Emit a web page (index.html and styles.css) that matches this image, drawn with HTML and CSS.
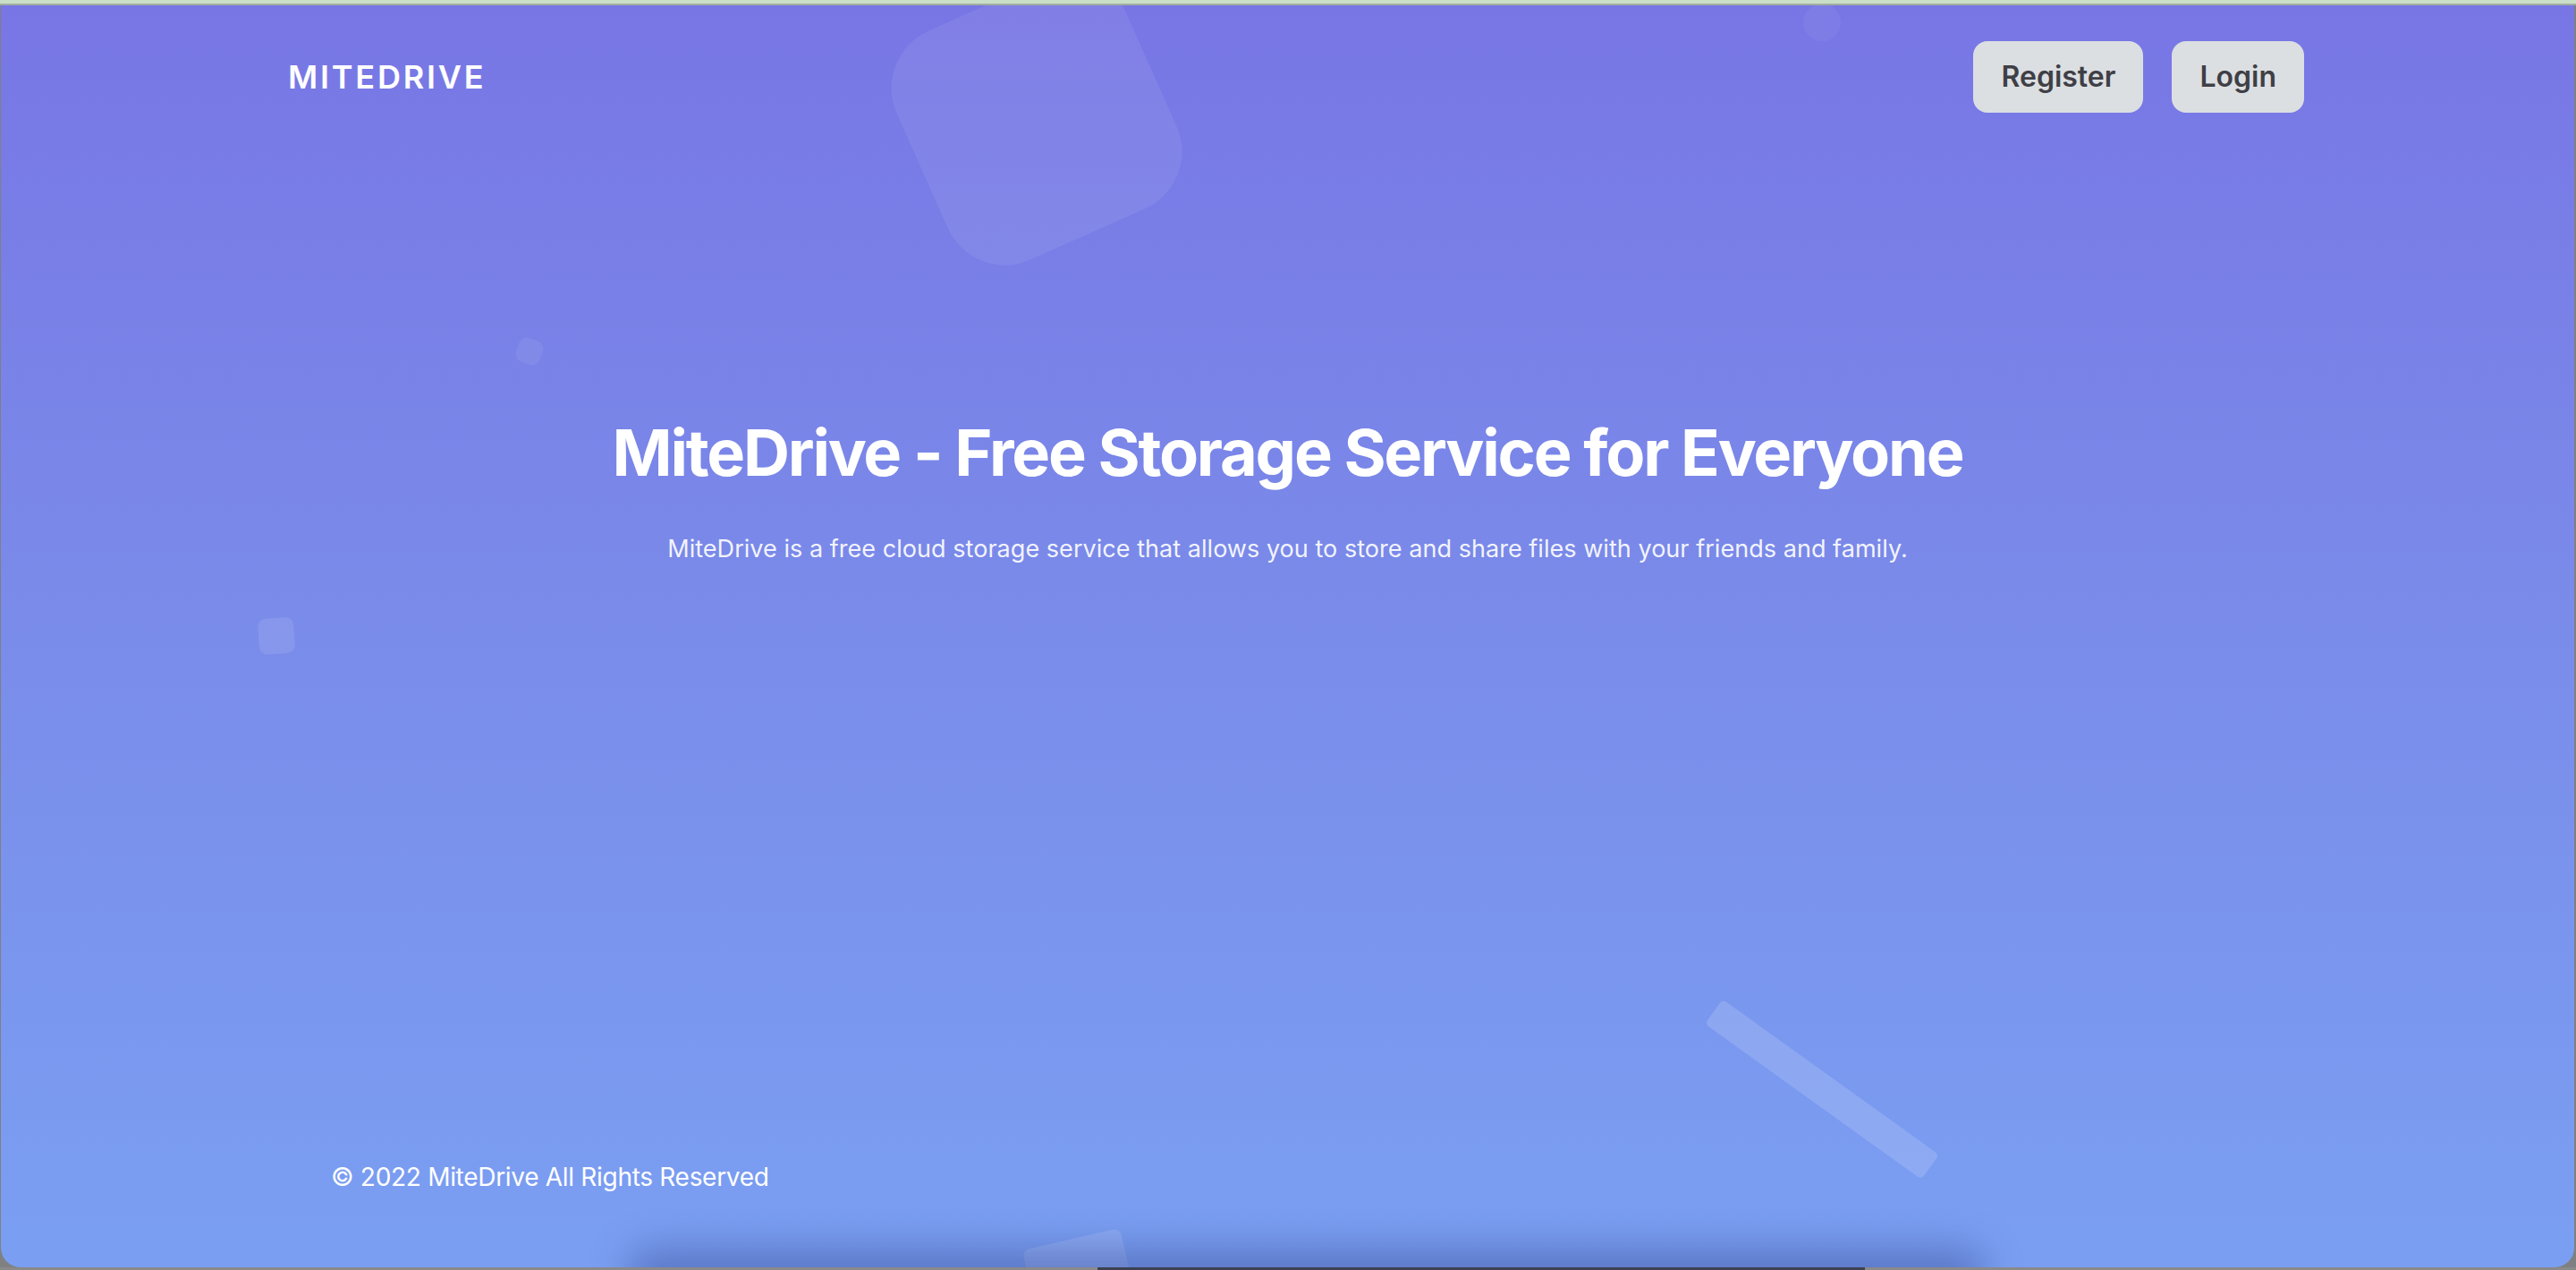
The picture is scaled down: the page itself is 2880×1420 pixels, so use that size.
FILE: index.html
```html
<!DOCTYPE html>
<html lang="en">
<head>
<meta charset="utf-8">
<title>MiteDrive</title>
<link rel="stylesheet" href="styles.css">
</head>
<body>
<div class="topstrip"></div>
<div class="window">
  <div class="shapes" aria-hidden="true">
    <span class="shape shape-big"></span>
    <span class="shape shape-circle"></span>
    <span class="shape shape-small"></span>
    <span class="shape shape-left"></span>
    <span class="shape shape-bar"></span>
    <span class="shape shape-bottom"></span>
    <span class="dock-shadow"></span>
  </div>
  <header class="nav">
    <a class="logo" href="#">MITEDRIVE</a>
    <div class="nav-actions">
      <a class="btn" href="#">Register</a>
      <a class="btn" href="#">Login</a>
    </div>
  </header>
  <main class="hero">
    <h1 class="hero-title">MiteDrive - Free Storage Service for Everyone</h1>
    <p class="hero-text">MiteDrive is a free cloud storage service that allows you to store and share files with your friends and family.</p>
  </main>
  <footer class="footer">© 2022 MiteDrive All Rights Reserved</footer>
</div>
<div class="bottomstrip"></div>
</body>
</html>
```
FILE: styles.css
```css
html, body {
  margin: 0;
  padding: 0;
}
body {
  width: 2880px;
  height: 1420px;
  overflow: hidden;
  background: #7f8081;
  font-family: "Inter", "Noto Sans", "Liberation Sans", sans-serif;
  display: flex;
  flex-direction: column;
}
.topstrip {
  height: 4px;
  background: #cadec8;
  border-bottom: 2px solid #a1ad9f;
  flex: none;
}
.window {
  position: relative;
  height: 1411px;
  flex: none;
  margin: 0 2px 0 1px;
  border-radius: 0 0 22px 22px;
  overflow: hidden;
  background: linear-gradient(180deg, #7876e5 0%, #7a8ae9 45%, #7a9ff2 100%);
  display: flex;
  flex-direction: column;
  color: #fff;
}
.shapes {
  position: absolute;
  inset: 0;
  pointer-events: none;
}
.shape {
  position: absolute;
  display: block;
  background: rgba(255, 255, 255, 0.08);
}
.shape-big {
  left: 1018px;
  top: -12px;
  width: 280px;
  height: 280px;
  border-radius: 70px;
  transform: rotate(-24deg);
  background: rgba(255, 255, 255, 0.07);
}
.shape-circle {
  left: 2015px;
  top: -2px;
  width: 42px;
  height: 42px;
  border-radius: 50%;
  background: rgba(255, 255, 255, 0.05);
}
.shape-small {
  left: 577px;
  top: 373px;
  width: 28px;
  height: 28px;
  border-radius: 9px;
  transform: rotate(20deg);
  background: rgba(255, 255, 255, 0.07);
}
.shape-left {
  left: 288px;
  top: 685px;
  width: 40px;
  height: 40px;
  border-radius: 9px;
  transform: rotate(-4deg);
  background: rgba(255, 255, 255, 0.1);
}
.shape-bar {
  left: 1887px;
  top: 1195px;
  width: 298px;
  height: 34px;
  border-radius: 5px;
  transform: rotate(35.7deg);
  background: rgba(255, 255, 255, 0.15);
}
.shape-bottom {
  left: 1153px;
  top: 1378px;
  width: 112px;
  height: 112px;
  border-radius: 8px;
  transform: rotate(-13deg);
  background: rgba(255, 255, 255, 0.12);
}
.dock-shadow {
  position: absolute;
  left: 700px;
  width: 1520px;
  bottom: -40px;
  height: 60px;
  border-radius: 40px;
  background: rgba(30, 40, 110, 0.35);
  filter: blur(22px);
}
.nav {
  position: relative;
  display: flex;
  align-items: center;
  justify-content: space-between;
  height: 80px;
  padding: 40px 302px 0 321px;
}
.logo {
  color: #fff;
  text-decoration: none;
  font-size: 36px;
  font-weight: 600;
  letter-spacing: 2.8px;
  line-height: 1;
}
.nav-actions {
  display: flex;
  gap: 32px;
}
.btn {
  display: block;
  padding: 16px 31px;
  font-size: 32px;
  line-height: 48px;
  font-weight: 600;
  color: #3f3f46;
  background: #dcdfe2;
  border-radius: 16px;
  text-decoration: none;
}
.hero {
  position: relative;
  text-align: center;
  margin-top: 337px;
}
.hero-title {
  margin: 0;
  font-size: 72px;
  line-height: 1.2;
  font-weight: 700;
  letter-spacing: -2.2px;
  color: #fff;
}
.hero-text {
  margin: 44px 0 0;
  font-size: 27px;
  line-height: 42px;
  font-weight: 400;
  letter-spacing: 0.04px;
  color: rgba(255, 255, 255, 0.92);
}
.footer {
  position: relative;
  margin-top: auto;
  padding: 0 0 80px 369px;
  font-size: 28px;
  line-height: 42px;
  letter-spacing: -0.3px;
  color: #fff;
}
.bottomstrip {
  flex: none;
  height: 3px;
  background: linear-gradient(90deg, #8a8a8a 0%, #8a8a8a 42.6%, #3d4152 42.6%, #3d4152 72.4%, #8a8a8a 72.4%);
}
```
